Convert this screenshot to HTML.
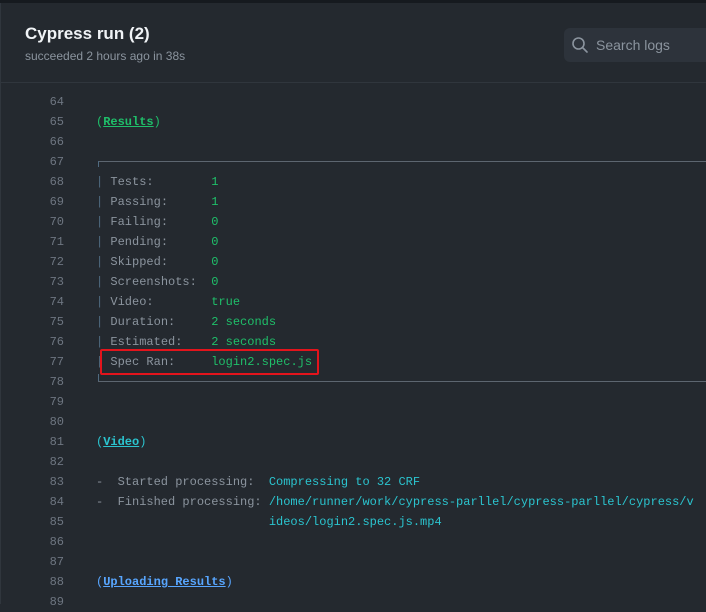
<!DOCTYPE html>
<html><head><style>
*{margin:0;padding:0;box-sizing:border-box}
body{width:706px;height:604px;background:#24292f;overflow:hidden;position:relative;font-family:"Liberation Sans",sans-serif}
.top{position:absolute;left:0;top:0;width:706px;height:3px;background:#161a1f}
.lb{position:absolute;left:0;top:3px;width:1px;height:601px;background:#30363d}
.hd{position:absolute;left:1px;top:3px;right:0;height:80px;border-bottom:1px solid #30363d;background:#24292f}
h1{position:absolute;left:24px;top:21px;font-size:17px;font-weight:bold;color:#f0f3f6}
.sub{position:absolute;left:24px;top:46px;font-size:12px;color:#8b949e}
.search{position:absolute;left:563px;top:25px;width:160px;height:34px;border-radius:6px;background:#2d333b}
.search span{position:absolute;left:32px;top:9px;font-size:14px;color:#8b949e}
.ln{position:absolute;left:0;width:64px;text-align:right;font:12px "Liberation Mono",monospace;color:#6e7681;line-height:20px}
.tx{position:absolute;left:96px;font:12px "Liberation Mono",monospace;color:#8b949e;line-height:20px;white-space:pre}
.g{color:#1fbf6a}.c{color:#2bc4cf}.b{color:#58a6ff}.p{color:#4f6a80}
u{font-weight:bold;text-decoration:underline}
.hr{position:absolute;left:98px;right:0;height:1px;background:#5d6670}
.vl{position:absolute;left:98px;width:1px;background:#4f6a80}
.red{position:absolute;left:100px;top:349px;width:219px;height:26px;border:2px solid #e3141c;border-radius:2px}
</style></head><body>
<div class="top"></div><div class="lb"></div>
<div class="hd"><h1>Cypress run (2)</h1><div class="sub">succeeded 2 hours ago in 38s</div>
<div class="search"><svg width="18" height="18" viewBox="0 0 18 18" style="position:absolute;left:7px;top:8px"><circle cx="7.5" cy="7.5" r="5.5" fill="none" stroke="#8b949e" stroke-width="1.6"/><path d="M11.5 11.5L16 16" stroke="#8b949e" stroke-width="1.6" stroke-linecap="round"/></svg><span>Search logs</span></div></div>

<div class="ln" style="top:92px">64<br>65<br>66<br>67<br>68<br>69<br>70<br>71<br>72<br>73<br>74<br>75<br>76<br>77<br>78<br>79<br>80<br>81<br>82<br>83<br>84<br>85<br>86<br>87<br>88<br>89</div>

<div class="tx g" style="top:112px">(<u>Results</u>)</div>
<div class="hr" style="top:161px"></div>
<div class="vl" style="top:161px;height:6px"></div>
<div class="tx" style="top:172px"><span class="p">|</span> Tests:        <span class="g">1</span>
<span class="p">|</span> Passing:      <span class="g">1</span>
<span class="p">|</span> Failing:      <span class="g">0</span>
<span class="p">|</span> Pending:      <span class="g">0</span>
<span class="p">|</span> Skipped:      <span class="g">0</span>
<span class="p">|</span> Screenshots:  <span class="g">0</span>
<span class="p">|</span> Video:        <span class="g">true</span>
<span class="p">|</span> Duration:     <span class="g">2 seconds</span>
<span class="p">|</span> Estimated:    <span class="g">2 seconds</span>
<span class="p">|</span> Spec Ran:     <span class="g">login2.spec.js</span></div>
<div class="vl" style="top:374px;height:8px"></div>
<div class="hr" style="top:381px"></div>
<div class="red"></div>
<div class="tx c" style="top:432px">(<u>Video</u>)</div>
<div class="tx" style="top:472px">-  Started processing:  <span class="c">Compressing to 32 CRF</span>
-  Finished processing: <span class="c">/home/runner/work/cypress-parllel/cypress-parllel/cypress/v</span>
                        <span class="c">ideos/login2.spec.js.mp4</span></div>
<div class="tx b" style="top:572px">(<u>Uploading Results</u>)</div>
</body></html>
